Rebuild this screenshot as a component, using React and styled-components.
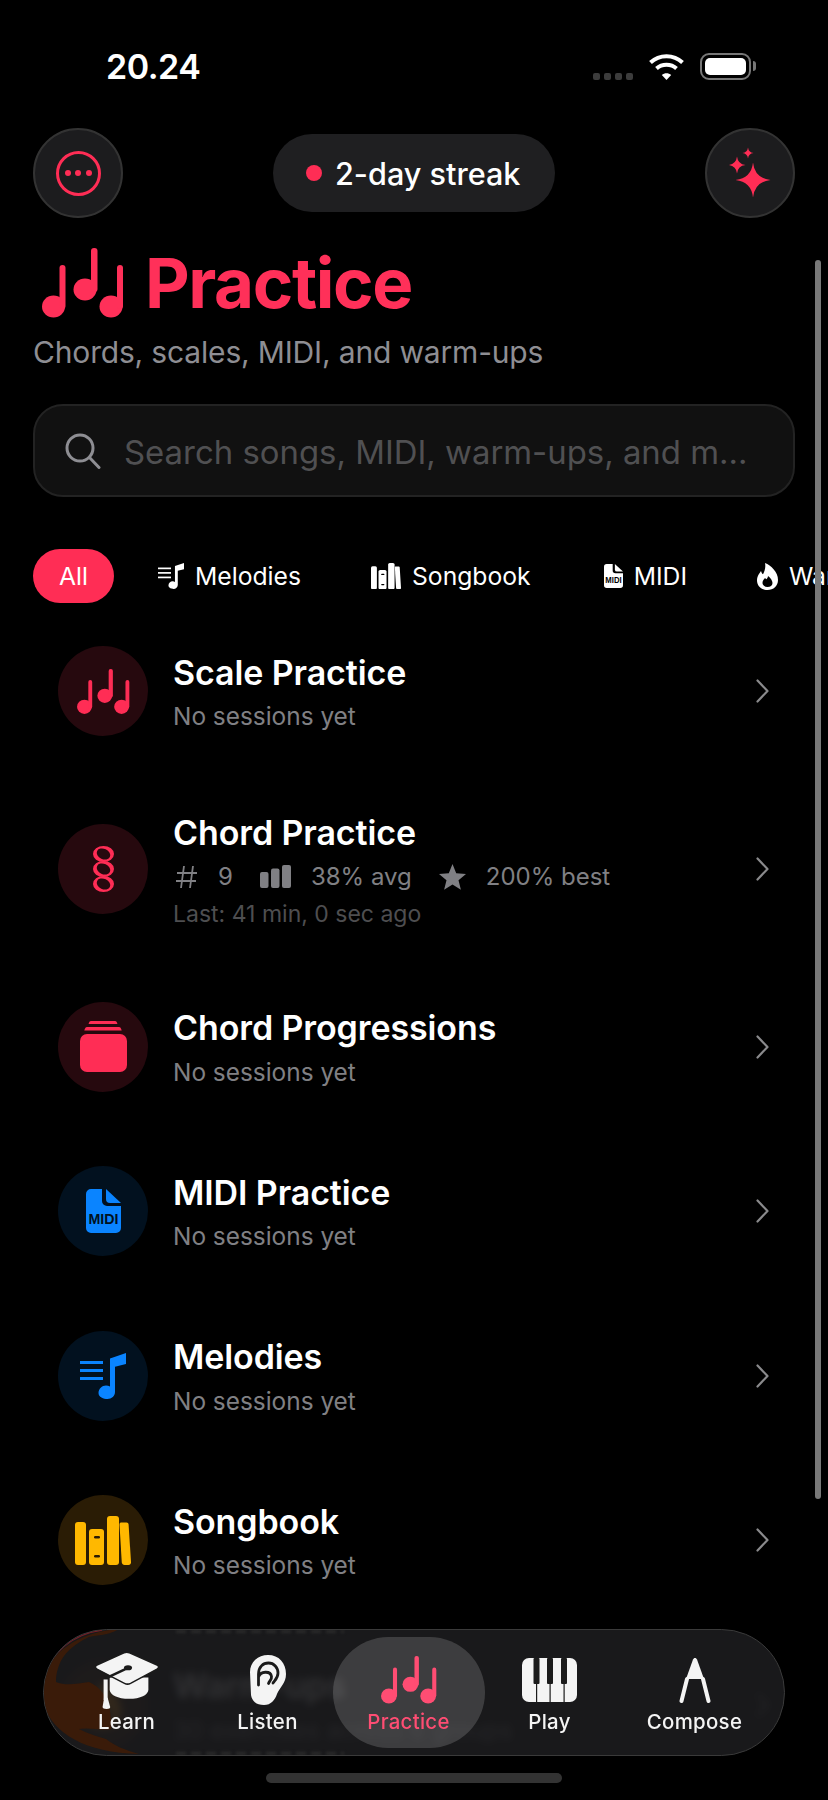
import React from "react";
import styled, { createGlobalStyle } from "styled-components";

const RED = "#ff2d55";
const BLUE = "#0a84ff";
const AMBER = "#ffb800";
const FONT = `Inter, "Noto Sans", "Liberation Sans", sans-serif`;

const GlobalStyle = createGlobalStyle`
  html, body {
    margin: 0;
    background: #000;
  }
  * {
    box-sizing: border-box;
  }
`;

function NotesIcon({ size = 82 }) {
  return (
    <svg width={size} height={(size * 70) / 82} viewBox="0 0 82 70" fill="currentColor">
      <ellipse cx="11.5" cy="58.5" rx="11.5" ry="11" />
      <rect x="17.5" y="17" width="6" height="44" rx="3" />
      <ellipse cx="43" cy="41.5" rx="11.5" ry="11" />
      <rect x="49" y="0" width="6.5" height="44" rx="3" />
      <ellipse cx="69" cy="58.5" rx="11.5" ry="11" />
      <rect x="75" y="17" width="6" height="44" rx="3" />
    </svg>
  );
}

function StackedNotesIcon() {
  const ring = (y) =>
    `M0 ${y}a10.5 8 0 1 0 21 0a10.5 8 0 1 0-21 0Z` +
    `M${4.16} ${y - 2.96}A7 5 25 1 0 ${16.84} ${y + 2.96}A7 5 25 1 0 ${4.16} ${y - 2.96}Z`;
  return (
    <svg width="21" height="46" viewBox="0 0 21 46" fill="currentColor" fillRule="evenodd">
      <path d={ring(8)} />
      <path d={ring(23)} />
      <path d={ring(38)} />
    </svg>
  );
}

function CardStackIcon() {
  return (
    <svg width="47" height="51" viewBox="0 0 47 51" fill="currentColor">
      <path d="M11 0h24c1.300 0 2 .9 2.400 3H8.600C9 .9 9.700 0 11 0Z" />
      <path d="M7 6h32c1.300 0 2 1 2.700 3.500H4.300C5 7 5.700 6 7 6Z" />
      <rect x="0" y="13" width="47" height="38" rx="7" />
    </svg>
  );
}

function MidiIcon({ size = 35, ink = "#00121f" }) {
  return (
    <svg width={size} height={(size * 44) / 35} viewBox="0 0 35 44" fill="currentColor">
      <path d="M5 0h11v12a5 5 0 0 0 5 5h14v22a5 5 0 0 1-5 5H5a5 5 0 0 1-5-5V5a5 5 0 0 1 5-5Z" />
      <path d="M20 0 35 14H24a4 4 0 0 1-4-4Z" />
      <text
        x="17.500"
        y="35"
        fill={ink}
        fontFamily="Liberation Sans, sans-serif"
        fontSize="15.500"
        fontWeight="700"
        textAnchor="middle"
        textLength="30"
        lengthAdjust="spacingAndGlyphs"
      >
        MIDI
      </text>
    </svg>
  );
}

function MelodyIcon({ size = 46 }) {
  return (
    <svg width={size} height={size} viewBox="0 0 46 46" fill="currentColor">
      <rect x="0" y="8" width="23" height="3" />
      <rect x="0" y="16" width="23" height="3" />
      <rect x="0" y="24" width="23" height="3" />
      <path d="M30 5.500 46 0v11l-11 2.800V39c0 4-3.400 7-7.500 7-4 0-9-2-9-6s3.500-7.500 7.500-7.500c1.500 0 2.800.4 4 1Z" />
    </svg>
  );
}

function BooksIcon({ size = 56, ink = "#2a1c05" }) {
  return (
    <svg width={size} height={(size * 49) / 56} viewBox="0 0 56 49" fill="currentColor">
      <rect x="0" y="6" width="11" height="43" rx="3" />
      <rect x="14" y="13" width="15" height="36" rx="3" />
      <rect x="19" y="20" width="6" height="2.500" rx="1.200" fill={ink} />
      <rect x="19" y="39" width="6" height="2.500" rx="1.200" fill={ink} />
      <rect x="32" y="0" width="12" height="49" rx="3" />
      <path d="M46 6.500h5.500c1.200 0 2 .8 2.100 2L56 46c.1 1.700-.9 3-2.500 3h-4c-1.500 0-2.500-.8-2.700-2.400L44.500 9c0-1.500.3-2.500 1.500-2.500Z" />
    </svg>
  );
}

function FlameIcon({ size = 21, ink = "#000" }) {
  return (
    <svg width={size} height={(size * 27) / 21} viewBox="0 0 21 27" fill="currentColor">
      <path d="M8 0c6 2.500 13 9 13 17 0 6-4.500 10-10.500 10S0 23 0 17.500C0 13 2.300 10.500 4 8c.5 1.500 1 2.500 2 3.300C7.500 8 9 4.500 8 0Z" />
      <path d="M11 13c2.500 2 4.500 4.500 4.500 7 0 2.600-2.200 4-5 4s-5-1.600-5-4.200c0-2.300 1.500-3.300 2.500-4.800.5.700 1 1 1.500 1.300.7-1 1.500-2 1.500-3.300Z" fill={ink} />
    </svg>
  );
}

function SparklesIcon() {
  const star = (cx, cy, r) => {
    const k = r * 0.1;
    return `M${cx} ${cy - r}Q${cx + k} ${cy - k} ${cx + r} ${cy}Q${cx + k} ${cy + k} ${cx} ${cy + r}Q${cx - k} ${cy + k} ${cx - r} ${cy}Q${cx - k} ${cy - k} ${cx} ${cy - r}Z`;
  };
  return (
    <svg width="42" height="52" viewBox="0 0 42 52" fill={RED}>
      <path d={star(24, 33, 17.5)} />
      <path d={star(8, 18, 8.5)} />
      <path d={star(19, 6, 5.5)} />
    </svg>
  );
}

function WifiIcon() {
  return (
    <svg width="35" height="26" viewBox="0 0 35 26" fill="none" stroke="#fff" strokeWidth="4">
      <path d="M1.500 8.500C10.500 0 24.500 0 33.500 8.500" />
      <path d="M7.500 14.500C13 9.500 22 9.500 27.500 14.500" />
      <path d="M17.500 26 12.800 21C15.500 18.500 19.500 18.500 22.200 21Z" fill="#fff" stroke="none" />
    </svg>
  );
}

function HashIcon() {
  return (
    <svg width="22" height="24" viewBox="0 0 22 24" fill="none" stroke="currentColor" strokeWidth="1.800">
      <path d="M8 1 5 23M17 1 14 23M1 8h20M0 16h20" />
    </svg>
  );
}

function BarsIcon() {
  return (
    <svg width="31" height="23" viewBox="0 0 31 23" fill="currentColor">
      <rect x="0" y="7" width="8.500" height="16" rx="2" />
      <rect x="11" y="3.500" width="8.500" height="19.500" rx="2" />
      <rect x="22" y="0" width="9" height="23" rx="2" />
    </svg>
  );
}

function StarIcon() {
  return (
    <svg width="27" height="26" viewBox="0 0 27 26" fill="currentColor">
      <path d="m13.500 0 3.700 9.200 9.800.7-7.500 6.300 2.400 9.600-8.400-5.300-8.400 5.300 2.400-9.600L0 9.900l9.800-.7Z" />
    </svg>
  );
}

function Chevron() {
  return (
    <svg width="13" height="24" viewBox="0 0 13 24" fill="none" stroke="#8a8a8c" strokeWidth="2.200" strokeLinecap="round" strokeLinejoin="round">
      <path d="m1.500 1.500 10 10.500-10 10.500" />
    </svg>
  );
}

function CapIcon() {
  return (
    <svg width="66" height="57" viewBox="0 0 64 56" fill="#f4f4f4">
      <path d="M15 25h38v12c0 5-8 9-19 9s-19-4-19-9Z" />
      <path d="M29 .8c1.700-.8 3.800-.8 5.500 0l27 12c2 1 2 3 0 4l-26 14c-2 1-4 1-6 0l-27-14c-2-1-2-3 0-4Z" stroke="#1b1b1b" strokeWidth="1.500" />
      <path d="M32 16 11 26" stroke="#1b1b1b" strokeWidth="2.500" />
      <ellipse cx="33" cy="15.500" rx="4" ry="2.500" fill="#1b1b1b" />
      <rect x="9" y="27" width="4" height="20" />
      <path d="M9.500 45h3.500l2.500 9c0 1-1 2-3.500 2s-4-1-4-2Z" />
    </svg>
  );
}

function EarIcon() {
  return (
    <svg width="36" height="50" viewBox="0 0 36 50" fill="#f4f4f4">
      <path d="M18 0c11 0 18 8 18 19 0 9-6 13-9 20-2 6-6 11-13 11-8 0-12-4-13-10L0 17C0 7 8 0 18 0Z" />
      <path d="M8.500 30V19C8.500 12 13 8 18.500 8 24 8 28 12.500 28 18c0 5-3 7-5 10M8.500 22c2-6 12-6.500 13-.5 .5 3-2 4-3 7" fill="none" stroke="#1b1b1b" strokeWidth="2.800" strokeLinecap="round" />
    </svg>
  );
}

function PianoIcon() {
  return (
    <svg width="55" height="44" viewBox="0 0 55 44" fill="#f4f4f4">
      <rect width="55" height="44" rx="7" />
      <g fill="#1b1b1b">
        <rect x="11.500" y="0" width="6" height="26" rx="1" />
        <rect x="25" y="0" width="6" height="26" rx="1" />
        <rect x="39" y="0" width="6" height="26" rx="1" />
        <rect x="14" y="25" width="1.200" height="19" />
        <rect x="27.500" y="25" width="1.200" height="19" />
        <rect x="41.500" y="25" width="1.200" height="19" />
      </g>
    </svg>
  );
}

function CompassIcon() {
  return (
    <svg width="32" height="45" viewBox="0 0 32 45" fill="#f4f4f4">
      <path d="M16 0c1 0 1.500.6 2 1.600L25 21H7L14 1.600C14.500.6 15 0 16 0Z" />
      <path d="M8 21 2.500 43M24 21l5.500 22" fill="none" stroke="#f4f4f4" strokeWidth="4" strokeLinecap="round" />
    </svg>
  );
}

function GlassStain() {
  return (
    <StainSvg width="130" height="127" viewBox="0 0 130 127">
      <path
        d="M77 1C40 3 0 25 0 63c0 35 35 62 97 63-14-4-24-8-33-15-9-3-18-5-27-10 10-2 24 2 32 0 1-10-1-22-5-30-4-9-10-14-17-17-12 2-24 4-33 0 0-10 3-19 8-26 6-8 16-15 25-19 10-2 20-2 30-8Z"
        fill="#3a1b09"
      />
      <path d="M2 50C8 25 30 6 60 2" fill="none" stroke="#7a1f28" strokeWidth="1.500" />
    </StainSvg>
  );
}

const Screen = styled.div`
  position: relative;
  width: 828px;
  height: 1800px;
  overflow: hidden;
  background: #000;
  color: #fff;
  font-family: ${FONT};
`;

const StatusBar = styled.div`
  height: 128px;
  padding: 47px 77px 0 106px;
  display: flex;
  justify-content: space-between;
  align-items: flex-start;
`;

const Clock = styled.span`
  font-size: 34px;
  line-height: 40px;
  font-weight: 600;
  letter-spacing: -0.5px;
`;

const StatusIcons = styled.div`
  display: flex;
  align-items: center;
  gap: 16px;
  margin-top: 6px;
`;

const SignalDots = styled.div`
  display: flex;
  gap: 4px;
  margin-top: 19px;
`;

const SignalDot = styled.i`
  width: 7px;
  height: 7px;
  border-radius: 2px;
  background: #3c3c3c;
`;

const Battery = styled.div`
  position: relative;
  width: 51px;
  height: 27px;
  padding: 3px;
  border: 2.5px solid #777;
  border-radius: 9px;

  &::before {
    content: "";
    display: block;
    height: 100%;
    border-radius: 5px;
    background: #fff;
  }

  &::after {
    content: "";
    position: absolute;
    top: 6px;
    right: -7px;
    width: 3px;
    height: 10px;
    border-radius: 0 3px 3px 0;
    background: #777;
  }
`;

const TopBar = styled.div`
  height: 90px;
  padding: 0 33px;
  display: flex;
  justify-content: space-between;
  align-items: center;
`;

const RoundButton = styled.button`
  width: 90px;
  height: 90px;
  padding: 0;
  border-radius: 50%;
  border: 2px solid #333;
  background: #1c1c1e;
  display: flex;
  align-items: center;
  justify-content: center;
`;

const MenuRing = styled.span`
  width: 45px;
  height: 45px;
  border-radius: 50%;
  border: 3.5px solid ${RED};
  display: flex;
  align-items: center;
  justify-content: center;
  gap: 4.500px;
`;

const MenuDot = styled.i`
  width: 6px;
  height: 6px;
  border-radius: 50%;
  background: ${RED};
`;

const StreakPill = styled.div`
  height: 78px;
  width: 282px;
  border-radius: 39px;
  background: #1f1f21;
  display: flex;
  align-items: center;
  padding-left: 33px;
  gap: 13px;
  font-size: 30.600px;
  font-weight: 500;
`;

const StreakDot = styled.i`
  width: 16px;
  height: 16px;
  border-radius: 50%;
  background: ${RED};
`;

const Hero = styled.header`
  padding: 30px 33px 0;
`;

const TitleRow = styled.div`
  height: 70px;
  display: flex;
  align-items: center;
  gap: 21px;
  padding-left: 9px;
  color: #ff3059;
`;

const Title = styled.h1`
  margin: 0;
  font-size: 69px;
  line-height: 72px;
  font-weight: 700;
  letter-spacing: -1.4px;
`;

const Subtitle = styled.p`
  margin: 16px 0 0;
  font-size: 30px;
  line-height: 36px;
  letter-spacing: -0.17px;
  color: #8e8e93;
`;

const SearchBox = styled.div`
  height: 93px;
  margin: 34px 33px 0;
  padding: 0 24px 0 30px;
  border-radius: 30px;
  border: 2px solid #232323;
  background: #111;
  display: flex;
  align-items: center;
  gap: 23px;
  color: #8e8e93;
`;

const SearchText = styled.span`
  margin-top: 2px;
  font-size: 32.900px;
  color: #505052;
  white-space: nowrap;
`;

const ChipScroller = styled.nav`
  margin-top: 52px;
  padding-left: 33px;
  display: flex;
  gap: 18px;
  overflow: hidden;
`;

const Chip = styled.div`
  flex: none;
  height: 54px;
  padding: 0 ${(p) => 26 + (p.$trail || 0)}px 0 26px;
  border-radius: 27px;
  display: flex;
  align-items: center;
  gap: 11px;
  font-size: 24.700px;
  color: #fff;
  background: ${(p) => (p.$active ? RED : "transparent")};
`;

const List = styled.section`
  margin-top: 6px;
`;

const Row = styled.article`
  height: ${(p) => (p.$tall ? 191 : 164.5)}px;
  padding: 0 59px 0 58px;
  display: flex;
  align-items: center;
  gap: 25px;
`;

const IconDisc = styled.div`
  flex: none;
  width: 90px;
  height: 90px;
  border-radius: 50%;
  display: flex;
  align-items: center;
  justify-content: center;
  color: ${(p) => p.$color};
  background: ${(p) => p.$tone};
`;

const RowBody = styled.div`
  flex: 1;
  min-width: 0;
  padding-top: ${(p) => (p.$tall ? 2 : 1)}px;
`;

const RowTitle = styled.h3`
  margin: 0;
  font-size: 34px;
  line-height: 38px;
  font-weight: 600;
  letter-spacing: -0.1px;
`;

const RowSub = styled.p`
  margin: 10.500px 0 0;
  font-size: 24.400px;
  line-height: 28px;
  color: #808084;
`;

const StatLine = styled.div`
  margin-top: 10px;
  padding-left: 3px;
  display: flex;
  align-items: center;
  height: 30px;
  font-size: 24px;
  color: #808084;
`;

const Stat = styled.span`
  display: flex;
  align-items: center;
  gap: ${(p) => p.$gap}px;
  margin-right: 27px;
`;

const LastSeen = styled.p`
  margin: 9px 0 0;
  font-size: 23px;
  line-height: 26px;
  color: #4e4e50;
`;

const ScrollThumb = styled.div`
  position: absolute;
  left: 815px;
  top: 260px;
  width: 6px;
  height: 1239px;
  border-radius: 3px;
  background: #787878;
`;

const TabBar = styled.nav`
  position: absolute;
  left: 43px;
  top: 1629px;
  width: 742px;
  height: 127px;
  padding: 8px 0 8px 12px;
  border-radius: 64px;
  border: 1.500px solid #3a3a3a;
  overflow: hidden;
  background: rgba(28, 28, 30, 0.9);
  backdrop-filter: blur(4px);
  display: flex;
`;

const StainSvg = styled.svg`
  position: absolute;
  left: -2px;
  top: -2px;
`;

const EdgeGhost = styled.i`
  position: absolute;
  left: 132px;
  width: 168px;
  height: 3px;
  ${(p) => (p.$bottom ? "bottom: 0;" : "top: 0;")}
  background: repeating-linear-gradient(90deg, #2b2b2b 0 10px, transparent 10px 15px);
  filter: blur(1.5px);
`;

const Tab = styled.div`
  position: relative;
  flex: none;
  width: 141px;
  padding-top: 14px;
  display: flex;
  flex-direction: column;
  align-items: center;
  color: ${(p) => (p.$active ? "#ff4d73" : "#f4f4f4")};

  &:last-child {
    margin-left: 4px;
  }

  &::before {
    content: "";
    display: ${(p) => (p.$active ? "block" : "none")};
    position: absolute;
    inset: -1px -5.500px;
    border-radius: 56px;
    background: rgba(255, 255, 255, 0.16);
  }
`;

const TabIcon = styled.span`
  position: relative;
  height: 56px;
  display: flex;
  align-items: center;
  justify-content: center;
`;

const TabLabel = styled.span`
  position: relative;
  margin-top: 2px;
  font-size: 20.400px;
  line-height: 24px;
  font-weight: 500;
  letter-spacing: 0.3px;
`;

const HomeIndicator = styled.div`
  position: absolute;
  left: 266px;
  top: 1773px;
  width: 296px;
  height: 10px;
  border-radius: 5px;
  background: #333;
`;

const tabs = [
  { label: "Learn", icon: <CapIcon /> },
  { label: "Listen", icon: <EarIcon /> },
  { label: "Practice", icon: <NotesIcon size={56} />, active: true },
  { label: "Play", icon: <PianoIcon /> },
  { label: "Compose", icon: <CompassIcon /> },
];

const redDisc = { $color: RED, $tone: "#26090e" };
const blueDisc = { $color: BLUE, $tone: "#02111f" };
const amberDisc = { $color: AMBER, $tone: "#2a1c05" };

export default function App() {
  return (
    <Screen>
      <GlobalStyle />
      <StatusBar>
        <Clock>20.24</Clock>
        <StatusIcons>
          <SignalDots>
            <SignalDot />
            <SignalDot />
            <SignalDot />
            <SignalDot />
          </SignalDots>
          <WifiIcon />
          <Battery />
        </StatusIcons>
      </StatusBar>

      <TopBar>
        <RoundButton>
          <MenuRing>
            <MenuDot />
            <MenuDot />
            <MenuDot />
          </MenuRing>
        </RoundButton>
        <StreakPill>
          <StreakDot />
          2-day streak
        </StreakPill>
        <RoundButton>
          <SparklesIcon />
        </RoundButton>
      </TopBar>

      <Hero>
        <TitleRow>
          <NotesIcon />
          <Title>Practice</Title>
        </TitleRow>
        <Subtitle>Chords, scales, MIDI, and warm-ups</Subtitle>
      </Hero>

      <SearchBox>
        <svg width="36" height="36" viewBox="0 0 36 36" fill="none" stroke="currentColor" strokeWidth="3" strokeLinecap="round">
          <circle cx="15" cy="15" r="13" />
          <path d="m24.500 24.500 9.500 10" />
        </svg>
        <SearchText>Search songs, MIDI, warm-ups, and m...</SearchText>
      </SearchBox>

      <ChipScroller>
        <Chip $active>All</Chip>
        <Chip>
          <MelodyIcon size={26} />
          Melodies
        </Chip>
        <Chip $trail={3}>
          <BooksIcon size={30} ink="#000" />
          Songbook
        </Chip>
        <Chip>
          <MidiIcon size={19} ink="#000" />
          MIDI
        </Chip>
        <Chip>
          <FlameIcon />
          Warm-ups
        </Chip>
      </ChipScroller>

      <List>
        <Row>
          <IconDisc {...redDisc}>
            <NotesIcon size={53} />
          </IconDisc>
          <RowBody>
            <RowTitle>Scale Practice</RowTitle>
            <RowSub>No sessions yet</RowSub>
          </RowBody>
          <Chevron />
        </Row>
        <Row $tall>
          <IconDisc {...redDisc}>
            <StackedNotesIcon />
          </IconDisc>
          <RowBody $tall>
            <RowTitle>Chord Practice</RowTitle>
            <StatLine>
              <Stat $gap={20}>
                <HashIcon />9
              </Stat>
              <Stat $gap={20}>
                <BarsIcon />
                38% avg
              </Stat>
              <Stat $gap={20}>
                <StarIcon />
                200% best
              </Stat>
            </StatLine>
            <LastSeen>Last: 41 min, 0 sec ago</LastSeen>
          </RowBody>
          <Chevron />
        </Row>
        <Row>
          <IconDisc {...redDisc}>
            <CardStackIcon />
          </IconDisc>
          <RowBody>
            <RowTitle>Chord Progressions</RowTitle>
            <RowSub>No sessions yet</RowSub>
          </RowBody>
          <Chevron />
        </Row>
        <Row>
          <IconDisc {...blueDisc}>
            <MidiIcon />
          </IconDisc>
          <RowBody>
            <RowTitle>MIDI Practice</RowTitle>
            <RowSub>No sessions yet</RowSub>
          </RowBody>
          <Chevron />
        </Row>
        <Row>
          <IconDisc {...blueDisc}>
            <MelodyIcon />
          </IconDisc>
          <RowBody>
            <RowTitle>Melodies</RowTitle>
            <RowSub>No sessions yet</RowSub>
          </RowBody>
          <Chevron />
        </Row>
        <Row>
          <IconDisc {...amberDisc}>
            <BooksIcon />
          </IconDisc>
          <RowBody>
            <RowTitle>Songbook</RowTitle>
            <RowSub>No sessions yet</RowSub>
          </RowBody>
          <Chevron />
        </Row>
        <Row>
          <IconDisc $color="#ff9500" $tone="#2a1400">
            <FlameIcon size={36} ink="#2a1400" />
          </IconDisc>
          <RowBody>
            <RowTitle>Warm-ups</RowTitle>
            <RowSub>30 exercises across 6 groups</RowSub>
          </RowBody>
          <Chevron />
        </Row>
      </List>

      <ScrollThumb />

      <TabBar>
        <GlassStain />
        <EdgeGhost />
        <EdgeGhost $bottom />
        {tabs.map((tab) => (
          <Tab key={tab.label} $active={tab.active}>
            <TabIcon>{tab.icon}</TabIcon>
            <TabLabel>{tab.label}</TabLabel>
          </Tab>
        ))}
      </TabBar>

      <HomeIndicator />
    </Screen>
  );
}
